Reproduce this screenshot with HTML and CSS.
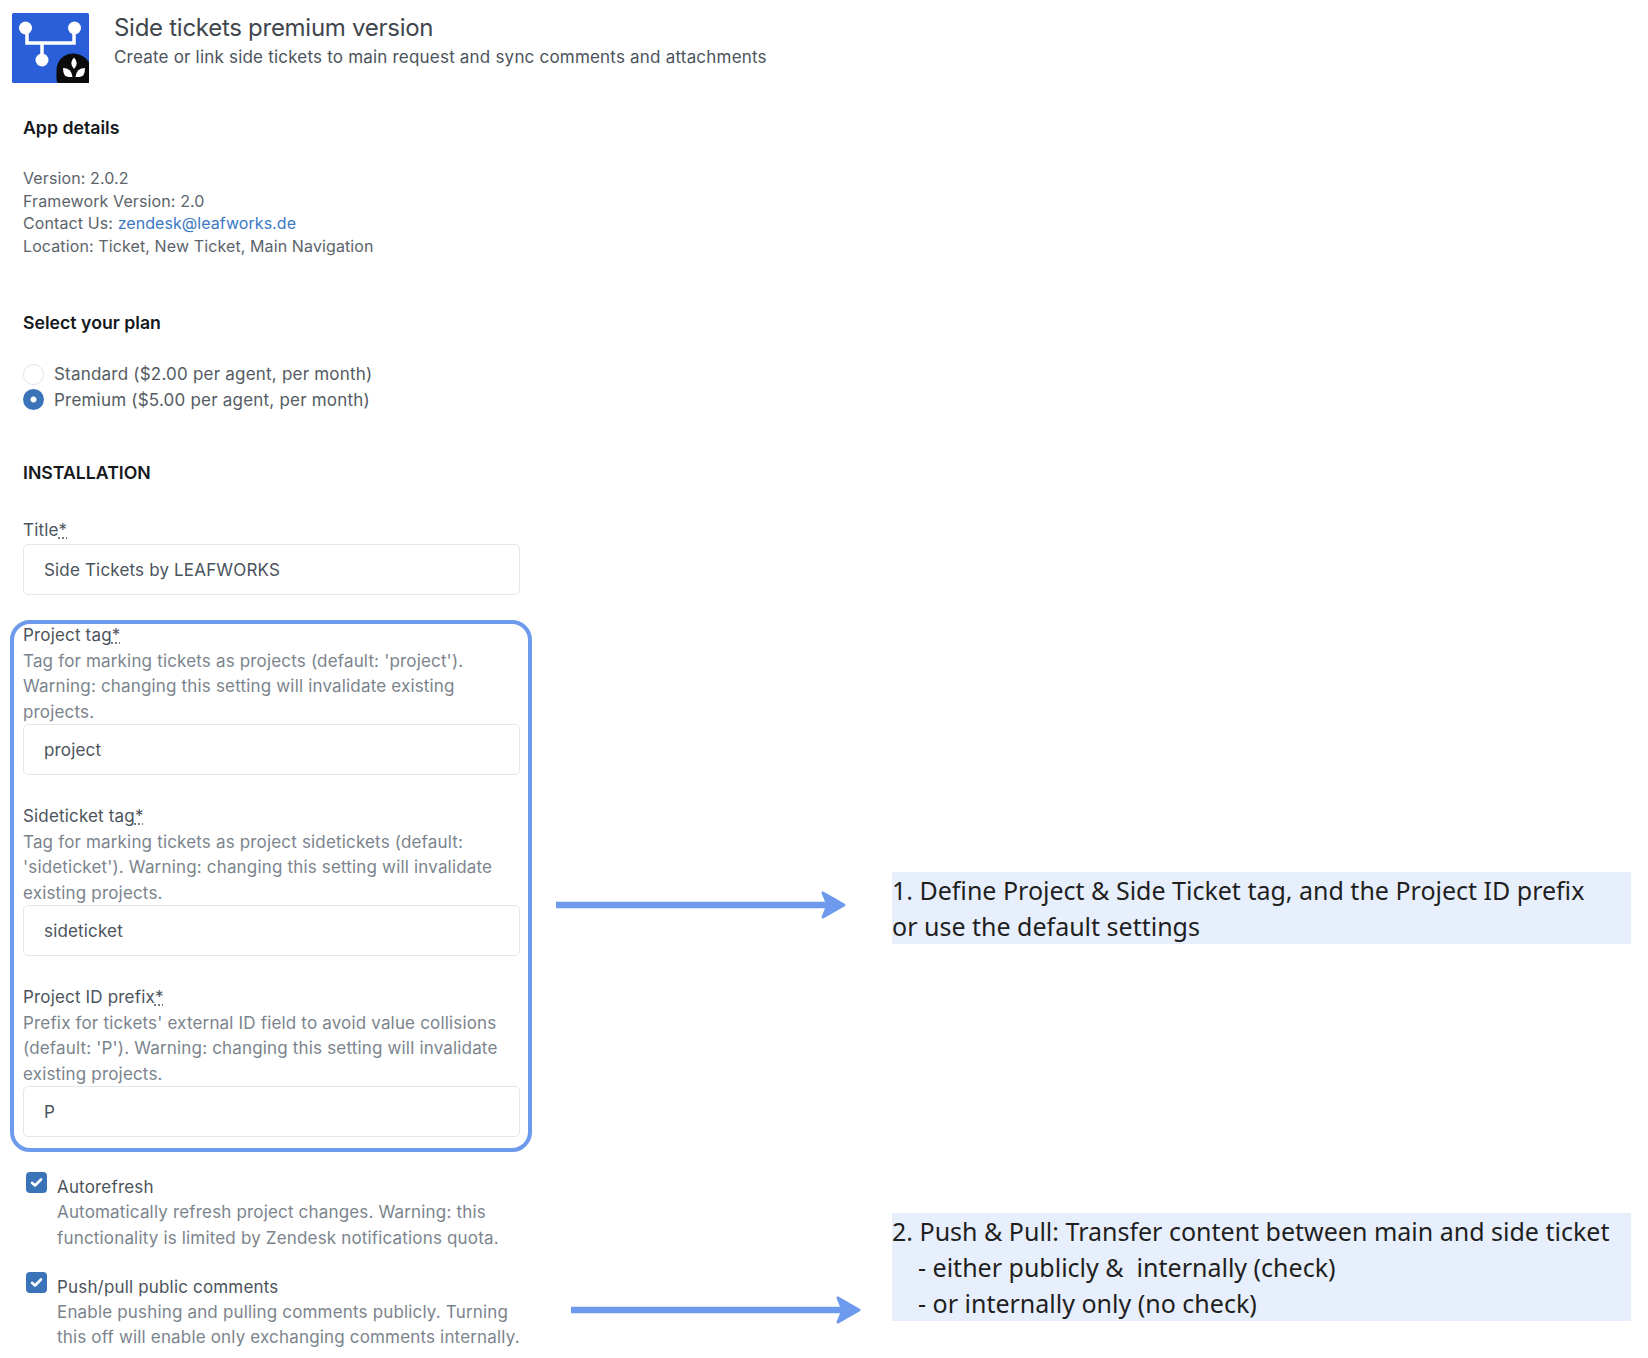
FILE: index.html
```html
<!DOCTYPE html>
<html lang="en">
<head>
<meta charset="utf-8">
<title>Side tickets premium version</title>
<link rel="stylesheet" href="styles.css">
</head>
<body>
<div class="page">
  <main class="left">
    <header class="app-head">
      <svg class="app-icon" viewBox="0 0 77 70" width="77" height="70">
        <rect width="77" height="70" rx="1.500" fill="#2a5fd9"/>
        <path d="M15 15V30H62V15M30 30V47" fill="none" stroke="#fff" stroke-width="3.500"/>
        <circle cx="13.500" cy="15" r="6.500" fill="#fff"/>
        <circle cx="62.500" cy="15" r="6.500" fill="#fff"/>
        <circle cx="30" cy="47" r="6.500" fill="#fff"/>
        <path d="M77 70H47Q44.500 70 44.500 66V57A16.500 16.500 0 0 1 61 40.500Q71 40.500 77 49Z" fill="#0b0b0b"/>
        <path d="M62 44.500Q67.500 50 62 56Q56.500 50 62 44.500Z" fill="#fff"/>
        <path d="M51 55Q59.500 55 60.500 64Q54.500 64.500 52.500 62Q51 59.500 51 55Z" fill="#fff"/>
        <path d="M73 55Q64.500 55 63.500 64Q69.500 64.500 71.500 62Q73 59.500 73 55Z" fill="#fff"/>
      </svg>
      <div class="app-titles">
        <h1 class="app-title">Side tickets premium version</h1>
        <p class="app-sub">Create or link side tickets to main request and sync comments and attachments</p>
      </div>
    </header>

    <section class="details">
      <h2 class="heading">App details</h2>
      <p class="meta">Version: 2.0.2<br>Framework Version: 2.0<br>Contact Us: <a class="link" href="#">zendesk@leafworks.de</a><br>Location: Ticket, New Ticket, Main Navigation</p>
    </section>

    <section class="plan">
      <h2 class="heading">Select your plan</h2>
      <div class="radios">
        <div class="radio-row"><span class="radio"></span><span>Standard ($2.00 per agent, per month)</span></div>
        <div class="radio-row"><span class="radio radio-on"></span><span>Premium ($5.00 per agent, per month)</span></div>
      </div>
    </section>

    <h2 class="heading install">INSTALLATION</h2>

    <div class="field field-title">
      <label class="label">Title<span class="req">*</span></label>
      <div class="input">Side Tickets by LEAFWORKS</div>
    </div>

    <div class="outline">
      <div class="field">
        <label class="label">Project tag<span class="req">*</span></label>
        <p class="hint">Tag for marking tickets as projects (default: 'project').<br>Warning: changing this setting will invalidate existing<br>projects.</p>
        <div class="input">project</div>
      </div>
      <div class="field">
        <label class="label">Sideticket tag<span class="req">*</span></label>
        <p class="hint">Tag for marking tickets as project sidetickets (default:<br>'sideticket'). Warning: changing this setting will invalidate<br>existing projects.</p>
        <div class="input">sideticket</div>
      </div>
      <div class="field">
        <label class="label">Project ID prefix<span class="req">*</span></label>
        <p class="hint">Prefix for tickets' external ID field to avoid value collisions<br>(default: 'P'). Warning: changing this setting will invalidate<br>existing projects.</p>
        <div class="input">P</div>
      </div>
    </div>

    <div class="check">
      <svg class="box" viewBox="0 0 21 21" width="21" height="21"><rect width="21" height="21" rx="4" fill="#3b73b9"/><path d="M6 10.800L9 13.500L15 7.500" fill="none" stroke="#fff" stroke-width="2.600" stroke-linecap="round" stroke-linejoin="round"/></svg>
      <div class="check-text">
        <div class="check-label">Autorefresh</div>
        <p class="hint">Automatically refresh project changes. Warning: this<br>functionality is limited by Zendesk notifications quota.</p>
      </div>
    </div>
    <div class="check check-next">
      <svg class="box" viewBox="0 0 21 21" width="21" height="21"><rect width="21" height="21" rx="4" fill="#3b73b9"/><path d="M6 10.800L9 13.500L15 7.500" fill="none" stroke="#fff" stroke-width="2.600" stroke-linecap="round" stroke-linejoin="round"/></svg>
      <div class="check-text">
        <div class="check-label">Push/pull public comments</div>
        <p class="hint">Enable pushing and pulling comments publicly. Turning<br>this off will enable only exchanging comments internally.</p>
      </div>
    </div>
  </main>

  <aside class="right">
    <div class="note-row note-row-1">
      <svg class="arrow" viewBox="0 0 292 30" width="292" height="30"><path d="M0 15H275" stroke="#6d9aec" stroke-width="6.500"/><path d="M267 3L288 15L267 27L272 15Z" fill="#6d9aec" stroke="#6d9aec" stroke-width="3" stroke-linejoin="round"/></svg>
      <div class="note">1. Define Project &amp; Side Ticket tag, and the Project ID prefix<br>or use the default settings</div>
    </div>
    <div class="note-row note-row-2">
      <svg class="arrow arrow-2" viewBox="0 0 292 30" width="292" height="30"><path d="M0 15H275" stroke="#6d9aec" stroke-width="6.500"/><path d="M267 3L288 15L267 27L272 15Z" fill="#6d9aec" stroke="#6d9aec" stroke-width="3" stroke-linejoin="round"/></svg>
      <div class="note">2. Push &amp; Pull: Transfer content between main and side ticket<br>&nbsp;&nbsp;&nbsp; - either publicly &amp;&nbsp; internally (check)<br>&nbsp;&nbsp;&nbsp; - or internally only (no check)</div>
    </div>
  </aside>
</div>
</body>
</html>
```
FILE: styles.css
```css
* { box-sizing: border-box; }
html, body { margin: 0; padding: 0; background: #fff; }
body { font-family: Inter, "Liberation Sans", sans-serif; color: #4b535c; }
p, h1, h2 { margin: 0; font-weight: normal; }

.page { display: flex; width: 1648px; height: 1358px; overflow: hidden; }
.left { width: 556px; flex: none; padding: 13px 0 0 23px; }
.right { flex: 1; }

.app-head { display: flex; margin-left: -11px; gap: 25px; height: 70px; white-space: nowrap; }
.app-icon { flex: none; display: block; }
.app-title { font-size: 24px; line-height: 30px; color: #3f464d; letter-spacing: -0.275px; }
.app-sub { font-size: 17px; line-height: 26px; margin-top: 1px; color: #4b535c; letter-spacing: 0.2px; }

.heading { font-size: 17.700px; font-weight: 600; line-height: 24px; color: #14181c; }
.details { margin-top: 33px; }
.meta { margin-top: 27px; font-size: 16px; line-height: 22.700px; color: #5b636b; letter-spacing: 0.11px; }
.link { color: #3a78c4; text-decoration: none; letter-spacing: 0.05px; }

.plan { margin-top: 53.500px; }
.radios { margin-top: 26px; }
.radio-row { display: flex; align-items: center; gap: 10px; height: 25.500px; font-size: 17px; letter-spacing: 0.21px; color: #545b63; }
.radio { width: 21px; height: 21px; border-radius: 50%; border: 1px solid #dfe3e6; background: #fff; flex: none; }
.radio-on { border: 0; background: radial-gradient(circle, #fff 0 2.500px, #3b73b9 3.500px); }

.install { margin-top: 48.500px; }

.field-title { margin-top: 32px; }
.field-title .label { line-height: 27.500px; }
.label { display: block; font-size: 17px; line-height: 26px; color: #4b535c; letter-spacing: 0.17px; }
.req { text-decoration: underline dotted; text-underline-offset: 2px; }
.input { height: 51px; width: 497px; border: 1px solid #e4e7ea; border-radius: 5px; padding-left: 20px; font-size: 17px; line-height: 50px; color: #4b535c; background: #fff; letter-spacing: 0.17px; }
.hint { font-size: 17px; line-height: 25.300px; color: #7b848d; letter-spacing: 0.17px; margin-bottom: -1px; }

.outline { margin: 25px 0 0 -13px; width: 522px; height: 532px; padding: 0 9px; border: 4px solid #6d9aec; border-radius: 20px; }
.outline .field:first-child { margin-top: -1.500px; }
.outline .field + .field { margin-top: 28.500px; }
.outline .label { line-height: 25px; }
.outline .hint { margin: 1px 0 -1px; line-height: 25.500px; }

.check { display: flex; gap: 10px; margin: 18px 0 0 3px; align-items: flex-start; }
.check-next { margin-top: 20px; }
.box { flex: none; display: block; margin-top: 2px; }
.check-text { padding-top: 3px; margin-top: 2px; }
.check-label { font-size: 17px; line-height: 25px; color: #4b535c; letter-spacing: 0.17px; }

.note-row { display: flex; align-items: flex-start; }
.note-row-1 { margin-top: 872px; }
.note-row-2 { margin-top: 269px; }
.arrow { flex: none; display: block; margin-top: 18px; margin-right: 44px; }
.arrow-2 { margin-top: 82px; margin-left: 15px; margin-right: 29px; }
.note { width: 739px; background: #e8effc; font-family: "Noto Sans", "Open Sans", sans-serif; font-size: 25px; line-height: 36px; color: #1f1f1f; white-space: nowrap; }
```
